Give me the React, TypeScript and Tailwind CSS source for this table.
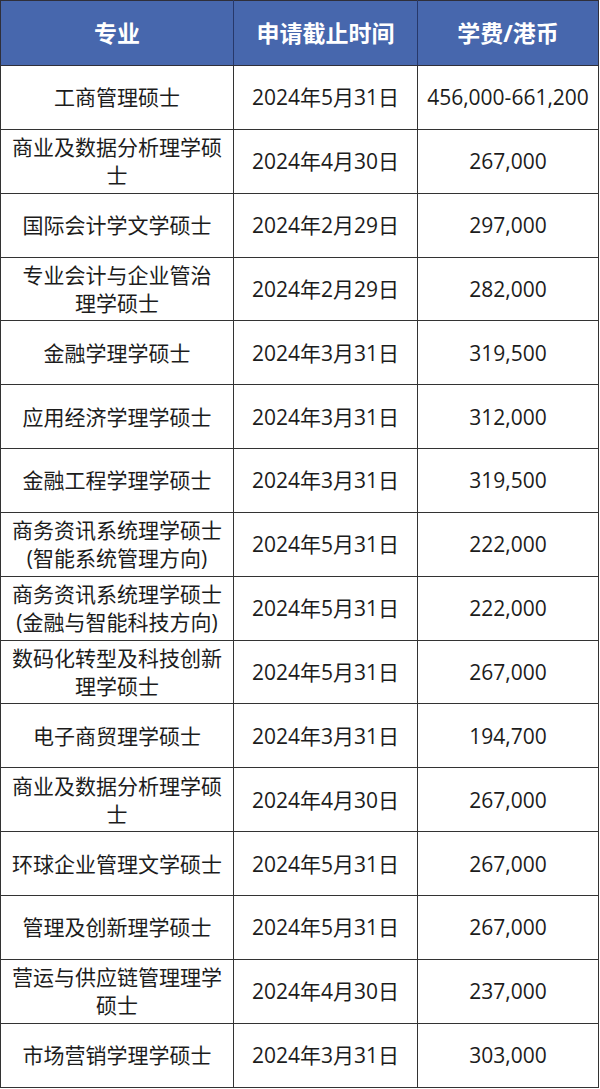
const rows: { name: string[]; date: string; fee: string }[] = [
  { name: ['工商管理硕士'], date: '2024年5月31日', fee: '456,000-661,200' },
  { name: ['商业及数据分析理学硕', '士'], date: '2024年4月30日', fee: '267,000' },
  { name: ['国际会计学文学硕士'], date: '2024年2月29日', fee: '297,000' },
  { name: ['专业会计与企业管治', '理学硕士'], date: '2024年2月29日', fee: '282,000' },
  { name: ['金融学理学硕士'], date: '2024年3月31日', fee: '319,500' },
  { name: ['应用经济学理学硕士'], date: '2024年3月31日', fee: '312,000' },
  { name: ['金融工程学理学硕士'], date: '2024年3月31日', fee: '319,500' },
  { name: ['商务资讯系统理学硕士', '(智能系统管理方向)'], date: '2024年5月31日', fee: '222,000' },
  { name: ['商务资讯系统理学硕士', '(金融与智能科技方向)'], date: '2024年5月31日', fee: '222,000' },
  { name: ['数码化转型及科技创新', '理学硕士'], date: '2024年5月31日', fee: '267,000' },
  { name: ['电子商贸理学硕士'], date: '2024年3月31日', fee: '194,700' },
  { name: ['商业及数据分析理学硕', '士'], date: '2024年4月30日', fee: '267,000' },
  { name: ['环球企业管理文学硕士'], date: '2024年5月31日', fee: '267,000' },
  { name: ['管理及创新理学硕士'], date: '2024年5月31日', fee: '267,000' },
  { name: ['营运与供应链管理理学', '硕士'], date: '2024年4月30日', fee: '237,000' },
  { name: ['市场营销学理学硕士'], date: '2024年3月31日', fee: '303,000' },
]

export default function App() {
  return (
    <div className="w-[600px] h-[1089px] bg-white font-['Open_Sans','Noto_Sans_CJK_SC',sans-serif] text-[#1c1c1c]">
      <table className="w-[598px] table-fixed border-collapse">
        <colgroup>
          <col className="w-[233px]" />
          <col className="w-[184px]" />
          <col className="w-[181px]" />
        </colgroup>
        <thead>
          <tr className="h-[65px] bg-[#4767ad] text-white text-[23px] font-bold">
            <th className="border border-[#2f2f3a] border-r-[#27386a] text-center">专业</th>
            <th className="border border-[#2f2f3a] border-x-[#27386a] text-center">申请截止时间</th>
            <th className="border border-[#2f2f3a] border-l-[#27386a] text-center">学费/港币</th>
          </tr>
        </thead>
        <tbody>
          {rows.map((r, i) => (
            <tr key={i} className="h-[63.85px] text-[21px] leading-[28px]">
              <td className="border border-[#333] px-1 text-center">
                {r.name.map((l, j) => (
                  <div key={j}>{l}</div>
                ))}
              </td>
              <td className="border border-[#333] text-center">{r.date}</td>
              <td className="border border-[#333] text-center">{r.fee}</td>
            </tr>
          ))}
        </tbody>
      </table>
    </div>
  )
}
